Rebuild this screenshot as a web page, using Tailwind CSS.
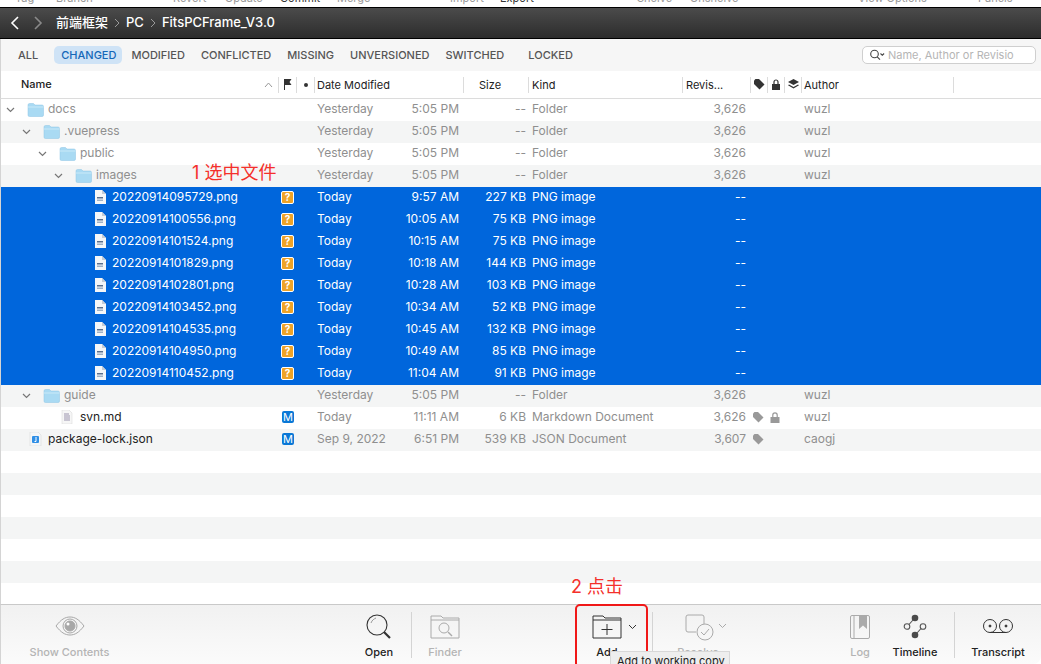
<!DOCTYPE html>
<html lang="zh">
<head>
    <meta charset="UTF-8">
    <meta name="viewport" content="width=device-width, initial-scale=1.0">
    <title>FitsPCFrame_V3.0</title>
    <script src="https://cdn.jsdelivr.net/npm/@tailwindcss/browser@4"></script>
</head>
<body class="bg-white overflow-hidden">
<div class="relative w-[1041px] h-[664px] overflow-hidden text-[12px] text-black font-['Inter','Noto_Sans_CJK_SC',sans-serif]">

    <!-- clipped labels of the toolbar above -->
    <div class="flex h-[7px] overflow-hidden bg-white text-[11px] leading-[11px] text-[#999]">
        <div class="flex -mt-[7px]">
            <span class="ml-[15px] w-[41px]">Tag</span>
            <span class="w-[117px]">Branch</span>
            <span class="w-[52px]">Revert</span>
            <span class="w-[55px]">Update</span>
            <span class="w-[57px] text-[#333]">Commit</span>
            <span class="w-[113px]">Merge</span>
            <span class="w-[50px]">Import</span>
            <span class="w-[137px] text-[#333]">Export</span>
            <span class="w-[53px]">Shelve</span>
            <span class="w-[168px]">Unshelve</span>
            <span class="w-[120px]">View Options</span>
            <span>Panels</span>
        </div>
    </div>

    <!-- path bar -->
    <div class="flex items-center h-[32px] border-y border-black bg-gradient-to-b from-[#4b4b4b] to-[#2d2d2d] text-white text-[13px] font-medium">
        <svg class="ml-[10px]" width="10" height="14" viewBox="0 0 10 14" fill="none" stroke="#fff" stroke-width="1.6"><path d="M8 1 2 7l6 6"/></svg>
        <svg class="ml-[13px]" width="10" height="14" viewBox="0 0 10 14" fill="none" stroke="#8a8a8a" stroke-width="1.6"><path d="M2 1l6 6-6 6"/></svg>
        <span class="ml-[13px]">前端框架</span>
        <svg class="ml-[6px]" width="7" height="10" viewBox="0 0 7 10" fill="none" stroke="#999" stroke-width="1"><path d="M1 1l4 4-4 4"/></svg>
        <span class="ml-[5px]">PC</span>
        <svg class="ml-[6px]" width="7" height="10" viewBox="0 0 7 10" fill="none" stroke="#999" stroke-width="1"><path d="M1 1l4 4-4 4"/></svg>
        <span class="ml-[5px]">FitsPCFrame_V3.0</span>
    </div>

    <!-- filter bar -->
    <div class="flex items-center h-[32px] bg-[#f6f6f6] border-l border-[#d4d4d4] text-[11px] font-medium text-[#555]">
        <span class="ml-[17px]">ALL</span>
        <span class="ml-[16px] pl-[7px] pr-[6px] h-[18px] leading-[18px] rounded-[5px] bg-[#cfe3f6] text-[#1467b8]">CHANGED</span>
        <span class="ml-[9px]">MODIFIED</span>
        <span class="ml-[16px]">CONFLICTED</span>
        <span class="ml-[16px]">MISSING</span>
        <span class="ml-[16px]">UNVERSIONED</span>
        <span class="ml-[16px]">SWITCHED</span>
        <span class="ml-[24px]">LOCKED</span>
        <div class="ml-auto mr-[5px] flex items-center w-[174px] h-[18px] bg-white border border-[#cfcfcf] rounded-[5px] font-normal text-[#b5b5b5]">
            <svg class="ml-[6px]" width="16" height="12" viewBox="0 0 16 12" fill="none" stroke="#444" stroke-width="1.1"><circle cx="5.5" cy="5" r="3.8"/><path d="M8.2 7.8 11 10.6"/><path d="M11.5 4.5l1.8 1.8 1.8-1.8"/></svg>
            <span class="ml-[3px] whitespace-nowrap overflow-hidden">Name, Author or Revisio</span>
        </div>
    </div>

    <!-- column header -->
    <div class="flex items-center h-[28px] bg-white border-b border-l border-b-[#dcdcdc] border-l-[#d4d4d4] text-[11px] text-[#222]">
        <div class="w-[278px] flex items-center h-[16px] border-r border-[#dcdcdc]">
            <span class="ml-[20px] font-medium">Name</span>
            <svg class="ml-auto mr-[5px]" width="9" height="6" viewBox="0 0 9 6" fill="none" stroke="#999" stroke-width="1"><path d="M1 5l3.5-4L8 5"/></svg>
        </div>
        <div class="w-[18px] h-[16px] flex items-center justify-center border-r border-[#dcdcdc]">
            <svg width="9" height="11" viewBox="0 0 9 11" fill="#333"><path d="M1 0h7.5L6.5 3 8.500 6H2v5H1z"/></svg>
        </div>
        <div class="w-[18px] h-[16px] flex items-center justify-center border-r border-[#dcdcdc]">
            <span class="w-[4px] h-[4px] rounded-full bg-[#333]"></span>
        </div>
        <div class="w-[149px] h-[16px] leading-[16px] pl-[2px] border-r border-[#dcdcdc]">Date Modified</div>
        <div class="w-[65px] h-[16px] leading-[16px] pl-[15px] border-r border-[#dcdcdc]">Size</div>
        <div class="w-[154px] h-[16px] leading-[16px] pl-[3px] border-r border-[#dcdcdc]">Kind</div>
        <div class="w-[68px] h-[16px] leading-[16px] pl-[3px] border-r border-[#dcdcdc]">Revis...</div>
        <div class="w-[17px] h-[16px] flex items-center justify-center border-r border-[#dcdcdc]">
            <svg width="11" height="11" viewBox="0 0 11 11" fill="#333"><path d="M0 1.500V5l5.500 5.500L10.500 5.500 5 0H1.500z"/></svg>
        </div>
        <div class="w-[17px] h-[16px] flex items-center justify-center border-r border-[#dcdcdc]">
            <svg width="10" height="11" viewBox="0 0 10 11" fill="#333"><path d="M1 5h8v6H1z"/><path d="M3 5V3a2 2 0 0 1 4 0v2" fill="none" stroke="#333" stroke-width="1.2"/></svg>
        </div>
        <div class="w-[17px] h-[16px] flex items-center justify-center border-r border-[#dcdcdc]">
            <svg width="11" height="11" viewBox="0 0 11 11" fill="#333"><path d="M5.500 0 11 3 5.500 6 0 3z"/><path d="M1 5.500 5.500 8 10 5.500 11 6.200 5.500 9.500 0 6.200z"/></svg>
        </div>
        <div class="w-[152px] h-[16px] leading-[16px] pl-[2px] border-r border-[#dcdcdc]">Author</div>
    </div>

    <!-- file rows -->
    <div id="rows" class="h-[505px] overflow-hidden border-l border-[#d4d4d4]"></div>

    <!-- bottom toolbar -->
    <div class="flex h-[60px] bg-gradient-to-b from-[#f1f1f1] to-[#fbfbfb] border-t border-l border-t-[#c9c9c9] border-l-[#d4d4d4] rounded-br-[8px] text-[11px] font-medium">
        <div class="ml-[-1px] w-[139px] flex flex-col items-center text-[#b4b4b4]">
            <svg class="mt-[11px] h-[20px]" width="30" height="20" viewBox="0 0 30 20" fill="none" stroke="#a8a8a8"><path d="M1 10C6 3.500 10 1 15 1s9 2.500 14 9c-5 6.500-9 9-14 9S6 16.500 1 10z"/><circle cx="15" cy="10" r="7"/><circle cx="15" cy="10" r="5" fill="#a8a8a8"/><circle cx="13" cy="8" r="1.500" fill="#fff" stroke="none"/></svg>
            <span class="mt-[8px]">Show Contents</span>
        </div>
        <div class="ml-[210px] w-[60px] flex flex-col items-center text-[#222]">
            <svg class="mt-[9px] h-[26px]" width="26" height="26" viewBox="0 0 26 26" fill="none" stroke="#333"><circle cx="11" cy="11" r="10" stroke-width="1.100"/><path d="M5 9c1-3 3-4 5-5" stroke="#999"/><path d="M18 18l6 6" stroke-width="2.200"/></svg>
            <span class="mt-[4px]">Open</span>
        </div>
        <div class="ml-[2px] mt-[7px] h-[46px] w-px bg-[#d4d4d4]"></div>
        <div class="ml-[3px] w-[60px] flex flex-col items-center text-[#b4b4b4]">
            <svg class="mt-[10px] h-[24px]" width="30" height="24" viewBox="0 0 30 24" fill="none" stroke="#aaa"><path d="M1 23V1h10l2 2h16v20z"/><path d="M1 5h28"/><circle cx="14" cy="13" r="5"/><path d="M18 17l4 4" stroke-width="1.500"/></svg>
            <span class="mt-[5px]">Finder</span>
        </div>
        <div class="ml-[102px] w-[60px] flex flex-col items-center text-[#222]">
            <div class="mt-[10px] h-[24px] relative">
                <svg width="30" height="24" viewBox="0 0 30 24" fill="none" stroke="#333"><path d="M1 23V1h10l2 2h16v20z"/><path d="M1 5h28"/><path d="M15 9v11M9.500 14.500h11"/></svg>
                <svg class="absolute left-[36px] top-[9px]" width="9" height="6" viewBox="0 0 9 6" fill="none" stroke="#333"><path d="M1 1l3.500 3.500L8 1"/></svg>
            </div>
            <span class="mt-[5px]">Add</span>
        </div>
        <div class="ml-[15px] mt-[7px] h-[46px] w-px bg-[#d4d4d4]"></div>
        <div class="ml-[15px] w-[60px] flex flex-col items-center text-[#b4b4b4]">
            <div class="mt-[9px] h-[25px] relative">
                <svg class="relative left-[2px]" width="30" height="27" viewBox="0 0 30 27" fill="none" stroke="#aaa"><path d="M11 18H3a2 2 0 0 1-2-2V3a2 2 0 0 1 2-2h14a2 2 0 0 1 2 2v7"/><circle cx="20" cy="18" r="8"/><path d="M16 18l3 3 5-6"/></svg>
                <svg class="absolute left-[35px] top-[9px]" width="9" height="6" viewBox="0 0 9 6" fill="none" stroke="#aaa"><path d="M1 1l3.500 3.500L8 1"/></svg>
            </div>
            <span class="mt-[5px]">Resolve</span>
        </div>
        <div class="ml-[107px] w-[50px] flex flex-col items-center text-[#b4b4b4]">
            <svg class="mt-[10px] h-[24px]" width="20" height="24" viewBox="0 0 20 24" fill="none" stroke="#aaa"><rect x="0.500" y="0.500" width="19" height="23" rx="1.500"/><path d="M4 1v22"/><path d="M9 1h8v13l-4-3.500L9 14z" fill="#aaa" stroke="none"/></svg>
            <span class="mt-[5px]">Log</span>
        </div>
        <div class="ml-[5px] w-[50px] flex flex-col items-center text-[#222]">
            <svg class="mt-[9px] h-[25px]" width="24" height="25" viewBox="0 0 24 25" fill="none" stroke="#555" stroke-width="1.100"><circle cx="12" cy="4" r="3.300" fill="#4a4a4a" stroke="none"/><circle cx="12" cy="21" r="3.300" fill="#4a4a4a" stroke="none"/><circle cx="4" cy="12.500" r="2.800"/><circle cx="20" cy="12.500" r="2.800"/><path d="M10 6 6 10.500M18 14.500 14 19"/></svg>
            <span class="mt-[5px]">Timeline</span>
        </div>
        <div class="ml-[14px] mt-[7px] h-[46px] w-px bg-[#d4d4d4]"></div>
        <div class="ml-[13px] w-[60px] flex flex-col items-center text-[#222]">
            <svg class="mt-[10px] h-[24px]" width="32" height="24" viewBox="0 0 32 24" fill="none" stroke="#333"><circle cx="8" cy="11" r="6.500"/><circle cx="24" cy="11" r="6.500"/><path d="M8 17.500h16"/><circle cx="8" cy="11" r="1" fill="#333"/><circle cx="24" cy="11" r="1" fill="#333"/></svg>
            <span class="mt-[5px]">Transcript</span>
        </div>
    </div>

    <!-- annotations on top of the screenshot -->
    <div class="absolute left-[192px] top-[163px] text-[18px] leading-[20px] text-[#f4302b]">1 选中文件</div>
    <div class="absolute left-[571px] top-[577px] text-[18px] leading-[20px] text-[#f4302b]">2 点击</div>
    <div class="absolute left-[575px] top-[604px] w-[73px] h-[64px] border-2 border-[#f01818] rounded-[5px]"></div>
    <div class="absolute left-[610px] top-[651px] w-[120px] h-[20px] bg-[#eeeeee] border border-[#d8d8d8] text-[11px] leading-[18px] pl-[6px] text-[#222] whitespace-nowrap">Add to working copy</div>
</div>

<script>
    const folderIcon = '<svg width="17" height="15" viewBox="0 0 17 15"><path d="M1 3a1.500 1.500 0 0 1 1.500-1.500h4L8 3h7a1.500 1.500 0 0 1 1.500 1.500V13a1.500 1.500 0 0 1-1.500 1.500H2.500A1.500 1.500 0 0 1 1 13z" fill="#a9daf3" stroke="#8cc5e4" stroke-width="0.500"/><path d="M1 5h15.500" stroke="#c9e9f8"/></svg>';
    const fileIcon = '<svg width="12" height="14" viewBox="0 0 12 14"><path d="M1 0h7l4 4v10H1z" fill="#f4f6f8"/><path d="M8 0l4 4H8z" fill="#c6ccd4"/><path d="M3 7h6v1.500H3z" fill="#5b6f8c"/><path d="M3 9.500h6V11H3z" fill="#9fb1c6"/></svg>';
    const mdIcon = '<svg width="12" height="14" viewBox="0 0 12 14"><path d="M1 0h7l3 3v11H1z" fill="#f6f6f6" stroke="#d5d5d5" stroke-width="0.500"/><path d="M3 4h5M3 6h6M3 8h6M3 10h6" stroke="#9a93ad"/></svg>';
    const jsonIcon = '<svg width="13" height="14" viewBox="0 0 13 14"><path d="M1 0h8l3 3v11H1z" fill="#f4f6f8" stroke="#d5d5d5" stroke-width="0.500"/><rect x="3" y="4" width="7" height="7" rx="1" fill="#2f8fe6"/><path d="M7 5v4.500H5.500" stroke="#fff" fill="none"/></svg>';
    const chevron = '<svg width="9" height="6" viewBox="0 0 9 6" fill="none" stroke="#777" stroke-width="1.200"><path d="M1 1l3.500 3.500L8 1"/></svg>';
    const tagIcon = '<svg width="11" height="11" viewBox="0 0 11 11" fill="#999"><path d="M0 1.500V5l5.500 5.500L10.500 5.500 5 0H1.500z"/></svg>';
    const lockIcon = '<svg width="10" height="11" viewBox="0 0 10 11" fill="#999"><path d="M0.500 5h9v6h-9z"/><path d="M2.800 5V3a2.200 2.200 0 0 1 4.400 0v2" fill="none" stroke="#999" stroke-width="1.200"/></svg>';

    const files = [
        { level: 0, name: 'docs', folder: 1 },
        { level: 1, name: '.vuepress', folder: 1 },
        { level: 2, name: 'public', folder: 1 },
        { level: 3, name: 'images', folder: 1 },
        { level: 4, name: '20220914095729.png', time: '9:57 AM', size: '227 KB' },
        { level: 4, name: '20220914100556.png', time: '10:05 AM', size: '75 KB' },
        { level: 4, name: '20220914101524.png', time: '10:15 AM', size: '75 KB' },
        { level: 4, name: '20220914101829.png', time: '10:18 AM', size: '144 KB' },
        { level: 4, name: '20220914102801.png', time: '10:28 AM', size: '103 KB' },
        { level: 4, name: '20220914103452.png', time: '10:34 AM', size: '52 KB' },
        { level: 4, name: '20220914104535.png', time: '10:45 AM', size: '132 KB' },
        { level: 4, name: '20220914104950.png', time: '10:49 AM', size: '85 KB' },
        { level: 4, name: '20220914110452.png', time: '11:04 AM', size: '91 KB' },
        { level: 1, name: 'guide', folder: 1 },
        { level: 2, name: 'svn.md', icon: mdIcon, status: 'M', date: 'Today', time: '11:11 AM', size: '6 KB', kind: 'Markdown Document', rev: '3,626', tag: 1, lock: 1 },
        { level: 0, name: 'package-lock.json', icon: jsonIcon, status: 'M', date: 'Sep 9, 2022', time: '6:51 PM', size: '539 KB', kind: 'JSON Document', rev: '3,607', author: 'caogj', tag: 1 }
    ];

    let html = '';
    for (let i = 0; i < 23; i++) {
        const f = files[i];
        const stripe = i % 2 ? 'bg-[#f4f5f5]' : 'bg-white';
        if (!f) {
            html += `<div class="h-[22px] ${stripe}"></div>`;
            continue;
        }
        const selected = !f.folder && !f.icon;
        const rowCls = selected ? 'bg-[#0066dc] text-white' : stripe + ' text-[#8f8f8f]';
        const nameCls = f.folder ? 'text-[#8f8f8f]' : (selected ? 'text-white' : 'text-[#222]');
        const left = f.level * 16;
        let tree = '';
        if (f.folder) {
            tree = `<span class="absolute top-[8px]" style="left:${left + 5}px">${chevron}</span>
                    <span class="absolute top-[3px]" style="left:${left + 26}px">${folderIcon}</span>`;
        } else {
            const iconLeft = f.level === 4 ? 93 : left + 28;
            tree = `<span class="absolute top-[3px]" style="left:${iconLeft}px">${f.icon || fileIcon}</span>`;
        }
        let badge = '';
        if (f.status === 'M') {
            badge = '<span class="block ml-[1px] w-[12px] h-[12px] rounded-[2px] bg-[#0a78d6] text-white text-[11px] leading-[12px] text-center">M</span>';
        } else if (selected) {
            badge = '<span class="block w-[13px] h-[13px] rounded-[2px] bg-[#eea327] border border-white text-white text-[10px] leading-[11px] text-center font-bold">?</span>';
        }
        html += `<div class="flex items-center h-[22px] pb-[2px] whitespace-nowrap ${rowCls}">
            <div class="relative w-[279px] h-[20px] leading-[20px]">${tree}
                <span class="absolute ${nameCls}" style="left:${f.folder || f.icon ? left + 47 : 111}px">${f.name}</span>
            </div>
            <div class="w-[37px] pl-[1px]">${badge}</div>
            <div class="w-[142px] flex justify-between"><span>${f.date || (selected ? 'Today' : 'Yesterday')}</span><span>${f.time || '5:05 PM'}</span></div>
            <div class="w-[67px] text-right">${f.size || '--'}</div>
            <div class="w-[151px] ml-[6px]">${f.kind || (f.folder ? 'Folder' : 'PNG image')}</div>
            <div class="w-[63px] text-right">${f.rev || (selected ? '--' : '3,626')}</div>
            <div class="w-[7px]"></div>
            <div class="w-[17px] h-[11px] leading-[0]">${f.tag ? tagIcon : ''}</div>
            <div class="w-[34px] h-[11px] leading-[0]">${f.lock ? lockIcon : ''}</div>
            <div class="w-[120px]">${selected ? '' : (f.author || 'wuzl')}</div>
        </div>`;
    }
    document.getElementById('rows').innerHTML = html;
</script>
</body>
</html>
